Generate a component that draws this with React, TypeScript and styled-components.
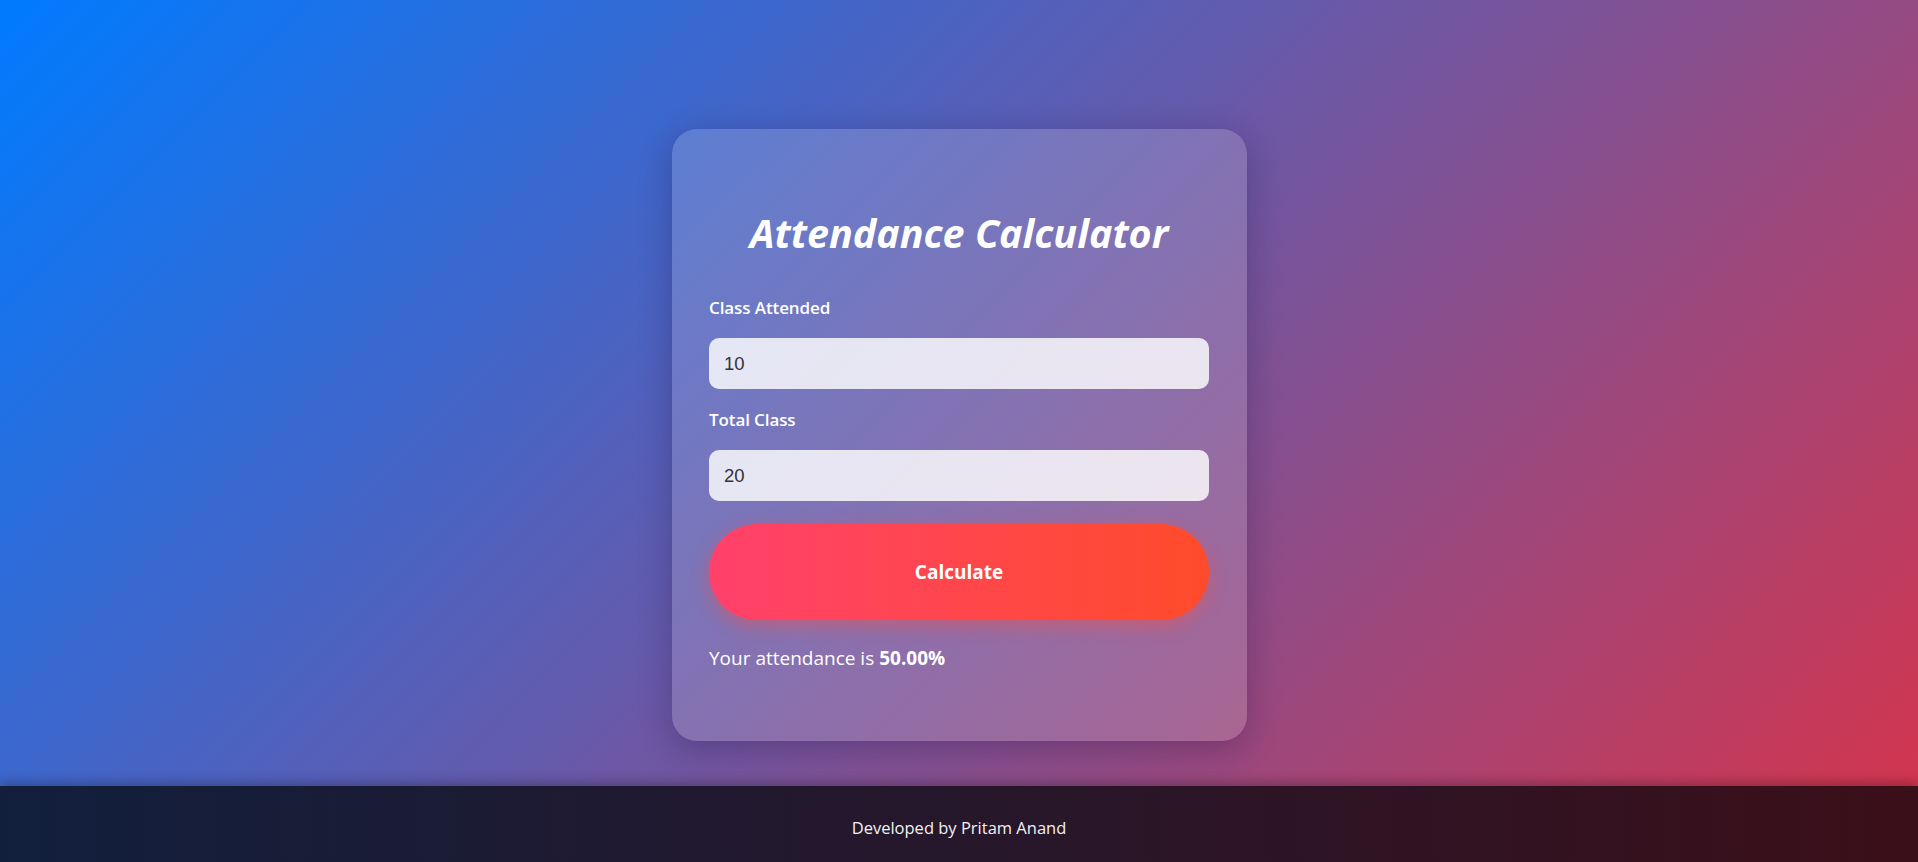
import React, { useState } from "react";
import styled, { createGlobalStyle } from "styled-components";

const GlobalStyle = createGlobalStyle`
  * { box-sizing: border-box; }
  html, body {
    margin: 0;
    padding: 0;
    height: 100%;
  }
  body {
    font-family: "Open Sans", "Noto Sans", sans-serif;
    background: linear-gradient(135deg, #007bff, #d8344a);
    min-height: 862px;
    overflow: hidden;
  }
`;

const Page = styled.div`
  display: flex;
  flex-direction: column;
  min-height: 862px;
`;

const Main = styled.main`
  flex: 1;
  display: flex;
  justify-content: center;
  align-items: flex-start;
  padding-top: 129px;
`;

const Card = styled.section`
  width: 575px;
  padding: 80px 37.5px 69px;
  border-radius: 25px;
  background: rgba(255, 255, 255, 0.16);
  box-shadow: 0 8px 32px rgba(20, 10, 60, 0.28);
  display: flex;
  flex-direction: column;
`;

const Title = styled.h1`
  margin: 0 0 39px;
  text-align: center;
  color: #ffffff;
  font-size: 39.5px;
  line-height: 48px;
  font-style: italic;
  font-weight: 700;
`;

const Field = styled.div`
  display: flex;
  flex-direction: column;
  margin-bottom: 19px;
`;

const Label = styled.label`
  color: #ffffff;
  font-size: 17px;
  letter-spacing: -0.1px;
  line-height: 24px;
  font-weight: 600;
  margin-bottom: 18px;
`;

const Input = styled.input`
  height: 51px;
  width: 100%;
  border: none;
  outline: none;
  border-radius: 10px;
  padding: 0 15px;
  background: rgba(255, 255, 255, 0.82);
  color: #333333;
  font-family: "Liberation Sans", Arial, sans-serif;
  font-size: 18.5px;
`;

const Button = styled.button`
  margin-top: 4px;
  height: 96px;
  width: 100%;
  border: none;
  border-radius: 50px;
  background: linear-gradient(to right, #ff416c, #ff4b2b);
  box-shadow: 0 6px 18px rgba(255, 75, 60, 0.45);
  color: #ffffff;
  font-family: "Open Sans", "Noto Sans", sans-serif;
  font-size: 19px;
  font-weight: 700;
  cursor: pointer;
`;

const Result = styled.p`
  margin: 25px 0 0;
  color: #ffffff;
  font-size: 19px;
  line-height: 27px;

  strong {
    font-weight: 700;
  }
`;

const Footer = styled.footer`
  height: 76px;
  padding-top: 6px;
  display: flex;
  align-items: center;
  justify-content: center;
  background: linear-gradient(to right, #111f3d, #3b0f19);
  box-shadow: 0 -4px 10px rgba(0, 0, 0, 0.25);
  color: #f2f2f2;
  font-size: 16.5px;
`;

export default function App() {
  const [attended, setAttended] = useState("10");
  const [total, setTotal] = useState("20");
  const [result, setResult] = useState("50.00");

  const calculate = () => {
    const a = parseFloat(attended);
    const t = parseFloat(total);
    if (t > 0) setResult(((a / t) * 100).toFixed(2));
  };

  return (
    <Page>
      <GlobalStyle />
      <Main>
        <Card>
          <Title>Attendance Calculator</Title>
          <Field>
            <Label htmlFor="attended">Class Attended</Label>
            <Input
              id="attended"
              type="number"
              value={attended}
              onChange={(e) => setAttended(e.target.value)}
            />
          </Field>
          <Field>
            <Label htmlFor="total">Total Class</Label>
            <Input
              id="total"
              type="number"
              value={total}
              onChange={(e) => setTotal(e.target.value)}
            />
          </Field>
          <Button onClick={calculate}>Calculate</Button>
          <Result>
            Your attendance is <strong>{result}%</strong>
          </Result>
        </Card>
      </Main>
      <Footer>Developed by Pritam Anand</Footer>
    </Page>
  );
}
